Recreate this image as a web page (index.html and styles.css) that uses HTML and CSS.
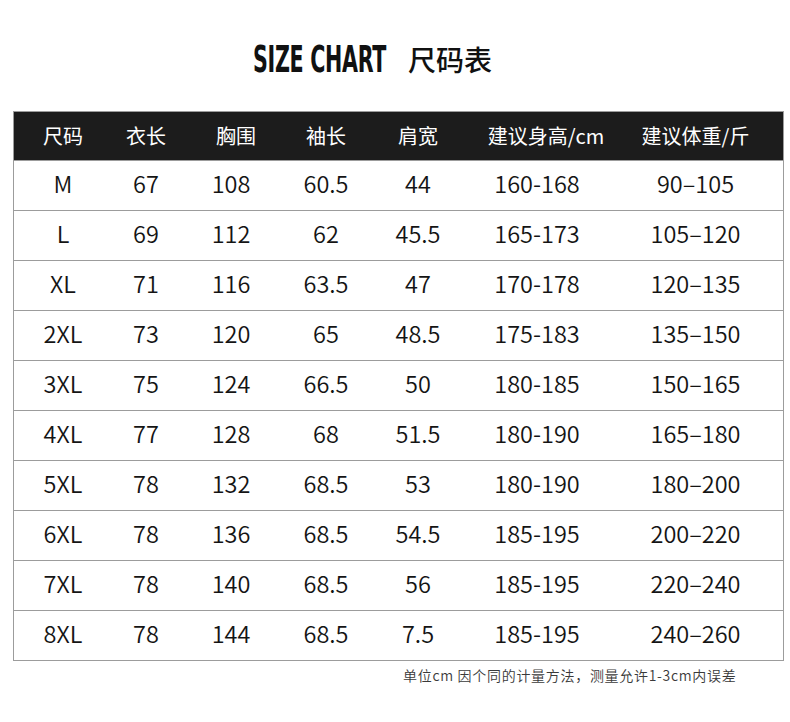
FILE: index.html
```html
<!DOCTYPE html>
<html lang="zh">
<head>
<meta charset="utf-8">
<title>Size Chart</title>
<link rel="stylesheet" href="styles.css">
</head>
<body>
<div class="page">
  <div class="title">
    <span class="title-en">SIZE CHART</span>
    <span class="title-cn">尺码表</span>
  </div>
  <div class="table">
    <div class="row head">
      <div>尺码</div><div>衣长</div><div>胸围</div><div>袖长</div><div>肩宽</div><div>建议身高/cm</div><div class="last">建议体重/斤</div>
    </div>
    <div class="row"><div>M</div><div>67</div><div>108</div><div>60.5</div><div>44</div><div>160-168</div><div class="last">90–105</div></div>
    <div class="row"><div>L</div><div>69</div><div>112</div><div>62</div><div>45.5</div><div>165-173</div><div class="last">105–120</div></div>
    <div class="row"><div>XL</div><div>71</div><div>116</div><div>63.5</div><div>47</div><div>170-178</div><div class="last">120–135</div></div>
    <div class="row"><div>2XL</div><div>73</div><div>120</div><div>65</div><div>48.5</div><div>175-183</div><div class="last">135–150</div></div>
    <div class="row"><div>3XL</div><div>75</div><div>124</div><div>66.5</div><div>50</div><div>180-185</div><div class="last">150–165</div></div>
    <div class="row"><div>4XL</div><div>77</div><div>128</div><div>68</div><div>51.5</div><div>180-190</div><div class="last">165–180</div></div>
    <div class="row"><div>5XL</div><div>78</div><div>132</div><div>68.5</div><div>53</div><div>180-190</div><div class="last">180–200</div></div>
    <div class="row"><div>6XL</div><div>78</div><div>136</div><div>68.5</div><div>54.5</div><div>185-195</div><div class="last">200–220</div></div>
    <div class="row"><div>7XL</div><div>78</div><div>140</div><div>68.5</div><div>56</div><div>185-195</div><div class="last">220–240</div></div>
    <div class="row"><div>8XL</div><div>78</div><div>144</div><div>68.5</div><div>7.5</div><div>185-195</div><div class="last">240–260</div></div>
  </div>
  <div class="note">单位cm 因个同的计量方法，测量允许1-3cm内误差</div>
</div>
</body>
</html>
```
FILE: styles.css
```css
html, body {
  margin: 0;
  padding: 0;
  background: #ffffff;
}
.page {
  width: 790px;
  height: 722px;
  font-family: "Noto Sans CJK SC", "Noto Sans", sans-serif;
  color: #141414;
}
.title {
  height: 111px;
  box-sizing: border-box;
  padding-top: 7px;
  padding-left: 253px;
  display: flex;
  align-items: center;
}
.title-en {
  display: inline-block;
  width: 132px;
  font-family: "DejaVu Sans Condensed", "Liberation Sans", sans-serif;
  font-weight: 700;
  font-size: 37px;
  line-height: 1;
  letter-spacing: -0.5px;
  white-space: nowrap;
  transform: scaleX(0.62);
  transform-origin: left center;
  color: #111;
}
.title-cn {
  margin-left: 23px;
  font-size: 28px;
  line-height: 1;
  font-weight: 500;
  color: #111;
}
.table {
  margin-left: 13px;
  width: 769px;
  border: 1px solid #9c9c9c;
}
.row {
  display: grid;
  grid-template-columns: 98px 68px 112px 68px 116px 140px 1fr;
  height: 50px;
  box-sizing: border-box;
  padding-bottom: 5px;
  border-top: 1px solid #9c9c9c;
  align-items: center;
  text-align: center;
  font-size: 23.5px;
  font-weight: 350;
  white-space: nowrap;
}
.row > :nth-child(3) { padding-right: 10px; }
.row > :nth-child(6) { padding-right: 18px; }
.row .last {
  padding-right: 8px;
}
.row.head {
  height: 48px;
  padding-bottom: 2px;
  border-top: none;
  background: #1c1c1c;
  color: #ffffff;
  font-size: 20px;
  font-weight: 400;
}
.row.head > :nth-child(3),
.row.head > :nth-child(6) { padding-right: 0; }
.note {
  padding-left: 403px;
  padding-top: 5px;
  font-size: 14px;
  letter-spacing: 0.7px;
  line-height: 18px;
  color: #3a3a3a;
  font-weight: 350;
  white-space: nowrap;
}
```
